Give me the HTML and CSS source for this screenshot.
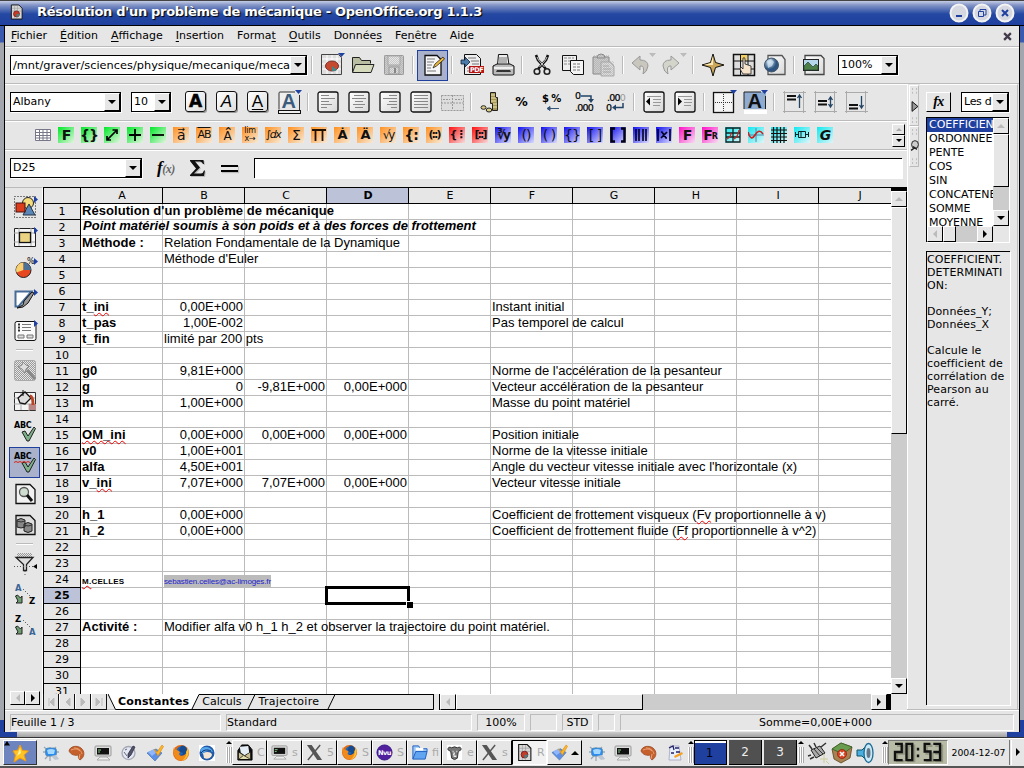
FILE: index.html
```html
<!DOCTYPE html>
<html lang="fr">
<head>
<meta charset="utf-8">
<title>Résolution d'un problème de mécanique - OpenOffice.org 1.1.3</title>
<link rel="stylesheet" href="styles.css">
</head>
<body>
<svg class="defs" width="0" height="0">
  <defs>
    <linearGradient id="paper" x1="0" y1="0" x2="1" y2="1"><stop offset="0" stop-color="#fff"/><stop offset="1" stop-color="#d8d8d8"/></linearGradient>
    <radialGradient id="blueball" cx=".35" cy=".3"><stop offset="0" stop-color="#cfe4f5"/><stop offset="1" stop-color="#2d5480"/></radialGradient>
    <pattern id="dots" width="2" height="2" patternUnits="userSpaceOnUse"><rect width="1" height="1" fill="#999"/><rect x="1" y="1" width="1" height="1" fill="#999"/></pattern>
  </defs>
  <symbol id="i-calc" viewBox="0 0 16 16"><path d="M2.500 .500h8L14 4v11.500H2.500z" fill="#d8d8d8" stroke="#111"/><path d="M3 4h10M3 7h10M6 1v14M9 1v14" stroke="#999" stroke-width=".6"/><circle cx="8" cy="10" r="3.200" fill="#c43c28" stroke="#611" stroke-width=".7"/><path d="M8 10v3.200a3.200 3.200 0 0 0 3.200-3.200z" fill="#487f80"/></symbol>
  <symbol id="i-term" viewBox="0 0 18 18"><rect x="1" y="2" width="16" height="10" rx="1" fill="#ddd" stroke="#999"/><rect x="3" y="4" width="12" height="6.500" fill="#111"/><path d="M4 6h3M4 8h2" stroke="#8c8"/><path d="M6 13h7l3 3H3z" fill="#eee" stroke="#aaa"/></symbol>
  <symbol id="i-gear" viewBox="0 0 18 18"><path d="M2 3l14 12M14 3L3 15M8 3v14M1 8h16" stroke="#9ab" stroke-width="1.300"/><rect x="3.500" y="4" width="11" height="8" rx="2.500" fill="#298cf0" stroke="#58a" stroke-width=".8"/><path d="M5 6q4-2 8 0l-1 4H6z" fill="#a5d8ff"/><path d="M9 12l4 4 4-1-3-4z" fill="#bcc6d2"/></symbol>
  <symbol id="i-shell" viewBox="0 0 18 18"><path d="M1 7c1-5 8-6 12-3 4 3 4 9-1 12-2-1-2-4-1-5-4 1-8 0-10-4z" fill="#c5602d" stroke="#9a4a22" stroke-width=".8"/><path d="M3 6c3-1 6-2 9 1M6 4c4 0 7 2 8 6M12 10l-1 5" stroke="#eda373" fill="none"/></symbol>
  <symbol id="i-pen" viewBox="0 0 18 18"><circle cx="8.500" cy="9" r="6.500" fill="#e3e8f3" stroke="#a5a8b5" stroke-width="1.300"/><path d="M13 2l2 1-4 8-3 3v-4z" fill="#556" stroke="#224" stroke-width=".7"/><path d="M4 8l3 4M5 6l2-1" stroke="#667"/></symbol>
  <symbol id="i-check" viewBox="0 0 18 18"><path d="M1 9l9-4 6 4-7 8z" fill="#5d8fe6" stroke="#47a" stroke-width=".7"/><path d="M2 8l6-3 3 3-5 4z" fill="#8fb6fa"/><path d="M8 5l3 3 5-7 1.500 1.500L12 12z" fill="#fbb52a" stroke="#d80" stroke-width=".6"/></symbol>
  <symbol id="i-fox" viewBox="0 0 18 18"><circle cx="9" cy="9" r="8" fill="#e36a10"/><circle cx="10" cy="7.500" r="5.500" fill="#2268b8"/><path d="M9 2c3-2 7 2 6 6-1 5-6 6-9 3 3 1 5-1 5-2l-3-1-1-2z" fill="#174b91"/><path d="M2 3c0 2 1 3 3 3l3 2-1 2c1 3 6 2 8-2 0 6-4 9-8 8S0 9 2 3z" fill="#f08a1b"/><path d="M16 4c2 6-1 12-7 13 4-2 6-6 5-9z" fill="#ffc32c"/></symbol>
  <symbol id="i-bird" viewBox="0 0 18 18"><rect x="1" y="1" width="16" height="16" fill="#fff"/><circle cx="9" cy="9" r="7.500" fill="#235aa8"/><path d="M5 9c4-2 9-1 9 2-1 3-5 5-8 3z" fill="#f3e7d4"/><path d="M2 6c4-5 11-3 13 2-4-2-8-1-11 2z" fill="#58a8ee"/><path d="M3 9c2-3 6-4 10-2" stroke="#0e2f66" fill="none"/></symbol>
  <symbol id="i-x" viewBox="0 0 18 18"><path d="M1 1h5l11 16h-5z" fill="#555"/><path d="M15 1L2 17" stroke="#555" stroke-width="1.500"/></symbol>
  <symbol id="i-mail" viewBox="0 0 18 18"><path d="M2 7l4-6h7l4 5v11H2z" fill="#111" stroke="#000"/><path d="M4 3l9-1 1 7-5 3-4-3z" fill="#e4edf5"/><path d="M3 9l6 4 6-4v7H3z" fill="#c9bf93"/><path d="M3 16l5-4 7 4" fill="#e4dcae" stroke="#443"/></symbol>
  <symbol id="i-vectors" viewBox="0 0 18 18"><path d="M4 2h9l2 14H3z" fill="#e8f0fc" stroke="#99b" stroke-width=".7"/><path d="M3 4l4-2 1 4M9 4h4M5 9h3M10 8h4" stroke="#226" fill="none" stroke-width="1.300"/><path d="M8 12l8-4 1 2-8 4z" fill="#f5a020"/></symbol>
  <symbol id="i-abc" viewBox="0 0 24 24"><text class="abc" x="1" y="8">ABC</text><path d="M9 12l3-1 3 5 6-9 1.500 1.500L16 21h-2z" fill="#7fb08a" stroke="#111" stroke-width=".9"/></symbol>
  <symbol id="i-al" viewBox="0 0 24 24"><rect x="2" y="2" width="20" height="20" rx="2" fill="url(#paper)" stroke="#111" stroke-width="1.300"/></symbol>
</svg>

<div class="desktop">
  <main class="window">
    <header class="title">
      <svg class="title-icon"><use href="#i-calc"/></svg>
      <h1>Résolution d'un problème de mécanique - OpenOffice.org 1.1.3</h1>
      <div class="winbtns">
        <svg viewBox="0 0 20 20"><circle cx="10" cy="10" r="8.500"/><path d="M7 13h6" stroke-width="2"/></svg>
        <svg viewBox="0 0 20 20"><circle cx="10" cy="10" r="8.500"/><path d="M8 9V6.500h6V12h-2M6.500 8.500h5v5h-5z"/></svg>
        <svg viewBox="0 0 20 20"><circle cx="10" cy="10" r="8.500"/><path d="M7 7l6 6M13 7l-6 6" stroke-width="2"/></svg>
      </div>
    </header>
    <div class="frame">
      <nav class="menu">
        <span><u>F</u>ichier</span><span><u>É</u>dition</span><span><u>A</u>ffichage</span><span><u>I</u>nsertion</span><span>Forma<u>t</u></span><span><u>O</u>utils</span><span>Donnée<u>s</u></span><span>Fe<u>n</u>être</span><span>Ai<u>d</u>e</span>
        <svg class="close" viewBox="0 0 8 8"><path d="M1 1l6 6M7 1L1 7" stroke="#433a4c" stroke-width="2"/></svg>
      </nav>
      <div class="bar bar-main">
        <div class="combo path"><span>/mnt/graver/sciences/physique/mecanique/meca</span><i></i></div>
        <b class="sep"></b>
        <button class="tb"><svg viewBox="0 0 24 24"><path d="M1.500 1.500h17l3 3v17h-20z" fill="#ddd" stroke="#444"/><path d="M2 6h19M2 11h19M2 16h19M7 2v19M12 2v19M17 2v19" stroke="#fff"/><path d="M5.500 13a6.500 5 0 1 0 13 0 6.500 5 0 0 0-13 0z" fill="#c4492f" stroke="#733"/><path d="M12 13l5 4a6 5 0 0 1-5 1z" fill="#3c8a8a"/><path d="M18 0h7l-3.500 4z" fill="#2040a0"/></svg></button>
        <button class="tb"><svg viewBox="0 0 24 24"><path d="M1.500 19V4.500h7l2 3h9v3" fill="#b9bda2" stroke="#222"/><path d="M1.500 19.500l3-8h18.500l-3 8z" fill="#d6dabd" stroke="#222"/></svg></button>
        <button class="tb"><svg viewBox="0 0 24 24"><rect x="2.500" y="2.500" width="19" height="19" rx="1" fill="#ccc" stroke="#999"/><rect x="6" y="3" width="12" height="9" fill="#e6e6e6" stroke="#aaa"/><rect x="7" y="14" width="10" height="7" fill="#ddd" stroke="#999"/><rect x="2" y="2" width="20" height="20" fill="url(#dots)" opacity=".4"/><path d="M13 15v5" stroke="#888" stroke-width="2"/></svg></button>
        <b class="sep"></b>
        <button class="tb on"><svg viewBox="0 0 24 24"><path d="M4 2.500h12l4 4v15.500H4z" fill="#f6f6f6" stroke="#111" stroke-width="1.300"/><path d="M6 6h8M6 9h7M6 12h5M6 15h4M6 18h9" stroke="#777"/><path d="M12 15l2-4 8-7 1.500 2-8 7z" fill="#f3bd3a" stroke="#222" stroke-width=".8"/></svg></button>
        <b class="sep"></b>
        <button class="tb"><svg viewBox="0 0 24 24"><path d="M4.500 1.500h12l4 4v16h-16z" fill="#eee" stroke="#111"/><path d="M8 5h8M11 8h8M12 11h7M7 15h3M7 18h3" stroke="#777"/><path d="M1 7h4V4l5 5-5 5v-3H1z" fill="#4b7ba8" stroke="#123" stroke-width=".8"/><rect x="9" y="13" width="15" height="7" fill="#b81414"/><text class="pdf" x="10" y="19">PDF</text></svg></button>
        <button class="tb"><svg viewBox="0 0 24 24"><path d="M6.500 12l1-10.500h9L18 12" fill="#eee" stroke="#111"/><path d="M8 5h8M8 7h8M8 9h8" stroke="#777"/><path d="M2 13l4-2h13l4 2v8q0 1-2 1H4q-2 0-2-1z" fill="#bbb" stroke="#111"/><path d="M3 15h19" stroke="#eee" stroke-width="2"/><path d="M6 17h13l1 2H5z" fill="#333"/></svg></button>
        <b class="sep"></b>
        <button class="tb"><svg viewBox="0 0 24 24"><path d="M6 2l2 5 8 9M18 2l-2 5-8 9" fill="none" stroke="#111" stroke-width="2.600"/><path d="M7 4l1.500 3 6 7M17 4l-1.500 3-6 7" fill="none" stroke="#ddd" stroke-width=".9"/><circle cx="7" cy="18.500" r="2.800" fill="none" stroke="#222" stroke-width="1.600"/><circle cx="17" cy="18.500" r="2.800" fill="none" stroke="#222" stroke-width="1.600"/></svg></button>
        <button class="tb"><svg viewBox="0 0 24 24"><path d="M1.500 2.500h14v15h-14z" fill="#eee" stroke="#111"/><path d="M3 5h10M3 8h10M3 11h6" stroke="#888" stroke-dasharray="3 1"/><path d="M9.500 7.500h13v14h-10l-3-3z" fill="#f4f4f4" stroke="#111"/><path d="M12 11h8M12 14h8M12 17h8" stroke="#777" stroke-dasharray="3 1"/></svg></button>
        <button class="tb"><svg viewBox="0 0 24 24"><path d="M1 4h16v17H1z" fill="#ccc" stroke="#888"/><path d="M5 5q0-4 4-4t4 4z" fill="#ccc" stroke="#888"/><path d="M9 9h9l4 4v10H9z" fill="#ddd" stroke="#aaa"/><path d="M11 13h6M11 16h8M11 19h8" stroke="#aaa"/><path d="M1 2h16v6h5v15H9v-2H1z" fill="url(#dots)" opacity=".4"/></svg></button>
        <b class="sep"></b>
        <button class="tb"><svg viewBox="0 0 24 24"><path d="M1 10l8-7v4q8 0 8 6-1 6-5 8 2-9-3-8v4z" fill="#c8c6bd" stroke="#999"/><path d="M18 0h7l-3.500 4z" fill="#bbb"/></svg></button>
        <button class="tb"><svg viewBox="0 0 24 24"><path d="M17 10L9 3v4q-8 0-8 6 1 6 5 8-2-9 3-8v4z" fill="#d3d5cb" stroke="#999"/><path d="M18 0h7l-3.500 4z" fill="#bbb"/></svg></button>
        <b class="sep"></b>
        <button class="tb"><svg viewBox="0 0 24 24"><path d="M12 1l2.500 8.500L23 12l-8.500 2.500L12 23l-2.500-8.500L1 12l8.500-2.500z" fill="#caa75a" stroke="#111"/><path d="M12 3v9H3l7-2z" fill="#fbe9b8"/></svg></button>
        <button class="tb"><svg viewBox="0 0 24 24"><path d="M1.500 1.500h21v21h-21z" fill="#ddd" stroke="#111" stroke-width="1.500"/><path d="M9 2h6v6H9z" fill="#f4ce62"/><path d="M1 8h22M1 16h22M8.500 1v22M16 1v22" stroke="#111"/><path d="M11 5q2-1 2 1v5l6 2v8h-8l-3-5 1-2 2 2z" fill="#f4e2cb" stroke="#222" stroke-width=".8"/></svg></button>
        <button class="tb"><svg viewBox="0 0 24 24"><path d="M5 2.500h14l3 4v15H5z" fill="url(#paper)" stroke="#555" stroke-width="1.300"/><circle cx="8.500" cy="12" r="7" fill="url(#blueball)" stroke="#456"/><path d="M4 8l4-2 3 3-2 4-4 2z" fill="#d7e8f2" opacity=".7"/></svg></button>
        <b class="sep"></b>
        <button class="tb"><svg viewBox="0 0 24 24"><path d="M3 2.500h16l3 3v16H3z" fill="url(#paper)" stroke="#444" stroke-width="1.300"/><rect x="1.500" y="6.500" width="15" height="11" fill="#b6d6ec" stroke="#222"/><path d="M2 17v-4l4-4 5 5 3-3 2 2v4z" fill="#4e7f48" stroke="#243" stroke-width=".7"/></svg></button>
        <div class="combo zoom"><span>100%</span><i></i></div>
      </div>
      <div class="mid">
        <div class="left-area">
          <div class="bar bar-format">
            <div class="combo font"><span>Albany</span><i></i></div>
            <div class="combo size"><span>10</span><i></i></div>
            <div class="group">
            <button class="tb"><em class="key heavy">A</em></button>
            <button class="tb"><em class="key ital">A</em></button>
            <button class="tb"><em class="key und">A</em></button>
            <button class="tb"><svg viewBox="0 0 24 24"><path d="M22.500 5v15M2 19.500V3q0-1 1-1h15" stroke="#333" fill="#f0f0f0"/><text class="fc" x="4.500" y="18">A</text><rect x="1.500" y="20.500" width="22" height="3" fill="#eee" stroke="#111"/><path d="M18 0h7l-3.500 4z" fill="#2040a0"/></svg></button>
            <b class="sep"></b>
            <button class="tb"><svg viewBox="0 0 24 24"><use href="#i-al"/><path d="M5 5.500h8M5 8.500h14M5 11.500h8M5 14.500h11M5 17.500h6" stroke="#888"/></svg></button>
            <button class="tb"><svg viewBox="0 0 24 24"><use href="#i-al"/><path d="M7 5.500h10M5 8.500h14M8 11.500h8M6 14.500h12M8 17.500h8" stroke="#888"/></svg></button>
            <button class="tb"><svg viewBox="0 0 24 24"><use href="#i-al"/><path d="M11 5.500h8M5 8.500h14M11 11.500h8M9 14.500h10M13 17.500h6" stroke="#888"/></svg></button>
            <button class="tb"><svg viewBox="0 0 24 24"><use href="#i-al"/><path d="M5 5.500h14M5 8.500h14M5 11.500h14M5 14.500h14M5 17.500h14" stroke="#888"/></svg></button>
            <button class="tb"><svg viewBox="0 0 24 24"><path d="M1.500 5.500h22v15h-22zM1 13h22M12.500 5v15" fill="#ddd" stroke="#999" stroke-dasharray="2 1"/><path d="M3 9.500h7M15 9.500h7" stroke="#999" stroke-dasharray="2 1"/></svg></button>
            <b class="sep"></b>
            <button class="tb"><svg viewBox="0 0 24 24"><path d="M11.500 2.500h5v5h2v13h-5v-7h-2z" fill="#a89654" stroke="#222"/><path d="M12 5h4M12 8h5M12 11h5M14 14h4M14 17h4" stroke="#f1e5ad"/><ellipse cx="4.500" cy="17.500" rx="2.500" ry="1.800" fill="#d9cb83" stroke="#222"/><ellipse cx="10" cy="20" rx="2.800" ry="2" fill="#d9cb83" stroke="#222"/></svg></button>
            <button class="tb"><em class="pct">%</em></button>
            <button class="tb"><svg viewBox="0 0 24 24"><text class="cur" x="1" y="12">$ %</text><path d="M7 18.500h11M6 18.500l3-2v4z" stroke="#357" fill="#357"/></svg></button>
            <button class="tb"><svg viewBox="0 0 24 24"><text class="dec" x="3" y="9">0</text><text class="dec" x="3" y="21">.000</text><path d="M9 6h10v4" stroke="#246" fill="none" stroke-width="1.500"/><path d="M16 9h6l-3 4z" fill="#246"/></svg></button>
            <button class="tb"><svg viewBox="0 0 24 24"><text class="dec" x="4" y="11">.00<tspan fill="#999" stroke="none">0</tspan></text><text class="dec" x="3" y="21">0</text><path d="M20 13v4.500H12" stroke="#246" fill="none" stroke-width="1.500"/><path d="M13 14.500v6l-4-3z" fill="#246"/></svg></button>
            <b class="sep"></b>
            <button class="tb"><svg viewBox="0 0 24 24"><use href="#i-al"/><path d="M5 6.500h14M11 9.500h8M11 12.500h8M11 15.500h7" stroke="#999"/><path d="M4 11.500l4-4v8z"/></svg></button>
            <button class="tb"><svg viewBox="0 0 24 24"><use href="#i-al"/><path d="M5 6.500h14M11 9.500h8M11 12.500h8M11 15.500h7" stroke="#999"/><path d="M9 11.500l-4-4v8z"/></svg></button>
            <b class="sep"></b>
            <button class="tb"><svg viewBox="0 0 24 24"><rect x="1.500" y="2.500" width="20" height="20" fill="#f4f4f4" stroke="#111" stroke-width="1.300"/><path d="M3 12.500h18M11.500 4v17" stroke="#333" stroke-dasharray="1 1"/><path d="M18 0h7l-3.500 4z" fill="#2040a0"/></svg></button>
            <button class="tb"><svg viewBox="0 0 24 24"><rect x="1" y="2" width="22" height="17" fill="#8fabd0"/><path d="M1 19V2h17M22.500 6v13" fill="none" stroke="#222"/><text class="fc bg" x="4.500" y="18">A</text><rect x="1" y="20" width="23" height="4" fill="#fff"/><path d="M18 0h7l-3.500 4z" fill="#2040a0"/></svg></button>
            <b class="sep"></b>
            <button class="tb"><svg viewBox="0 0 24 24"><path d="M2.500 1v22M21.500 1v22M1 2.500h23M1 21.500h23" stroke="#aaa"/><path d="M5 6h9M5 9.500h9" stroke="#111" stroke-width="2"/><path d="M17.500 18V5M15.500 8l2-3 2 3" stroke="#246" fill="none" stroke-width="1.300"/></svg></button>
            <button class="tb"><svg viewBox="0 0 24 24"><path d="M2.500 1v22M21.500 1v22M1 2.500h23M1 21.500h23" stroke="#aaa"/><path d="M5 11h9M5 14.500h9" stroke="#111" stroke-width="2"/><path d="M17.500 17V7M15.500 10l2-3 2 3M15.500 14l2 3 2-3" stroke="#246" fill="none" stroke-width="1.300"/></svg></button>
            <button class="tb"><svg viewBox="0 0 24 24"><path d="M2.500 1v22M21.500 1v22M1 2.500h23M1 21.500h23" stroke="#aaa"/><path d="M5 15h9M5 18.500h9" stroke="#111" stroke-width="2"/><path d="M17.500 6v12M15.500 15l2 3 2-3" stroke="#246" fill="none" stroke-width="1.300"/></svg></button>
            </div>
          </div>
          <div class="bar bar-math">
            <div class="mathicons">
              <svg class="m" viewBox="0 0 16 16"><path d="M.500 2.500h15v11H.500zM.500 5.500h15M.500 8.500h15M.500 11h15M4.500 2v12M8 2v12M12 2v12" fill="#fff" stroke="#778"/></svg>
              <span class="m g bold">F</span><span class="m g bold">{}</span>
              <svg class="m g" viewBox="0 0 16 16"><path d="M3 13L13 3M8.500 3H13v4M3 9v4h4" stroke="#000" stroke-width="1.700" fill="none"/></svg>
              <svg class="m g" viewBox="0 0 16 16"><path d="M8 2v12M2 8h12" stroke="#000" stroke-width="1.800"/></svg>
              <svg class="m g" viewBox="0 0 16 16"><path d="M2 8h12" stroke="#000" stroke-width="1.800"/></svg>
              <span class="m o vec">a</span><span class="m o over">AB</span><span class="m o hat">A</span><span class="m o lim">lim<br>x→</span><span class="m o int">∫dx</span><span class="m o">Σ</span>
              <svg class="m o" viewBox="0 0 16 16"><path d="M1 3h14M4.500 3v11M11.500 3v11" stroke="#210" stroke-width="1.800"/></svg>
              <span class="m o dot">Ȧ</span><span class="m o dot">Ä</span><span class="m o rooty">√y</span><span class="m o bold">{:</span><span class="m o sm">(::)</span>
              <span class="m r sm">{⋮</span><span class="m r sm">[::]</span>
              <span class="m b rooty bold">∛y</span><span class="m b">()</span><span class="m b">( )</span><span class="m b">{}</span><span class="m b">[ ]</span>
              <svg class="m b" viewBox="0 0 16 16"><path d="M5 1.500H1.500v13H5M11 1.500h3.500v13H11" fill="none" stroke="#001" stroke-width="2.500"/></svg>
              <svg class="m b" viewBox="0 0 16 16"><path d="M3 2v12M6 2v12M10 2v12M13 2v12" stroke="#002" stroke-width="1.600"/></svg>
              <svg class="m b" viewBox="0 0 16 16"><path d="M2 2v12M14 2v12M5 5h1l4 6h1M11 5l-6 6" stroke="#002" stroke-width="1.700" fill="none"/></svg>
              <span class="m p bold">F</span><span class="m p bold fr">F<small>R</small></span>
              <svg class="m c" viewBox="0 0 16 16"><path d="M1 1h14v14H1zM8 1v14M1 6h14M1 10h14" fill="none" stroke="#122" stroke-width="1.300"/><path d="M2 12q4-2 4-6M9 12q4-2 5-9" fill="none" stroke="#c22" stroke-width="1.300"/></svg>
              <svg class="m c" viewBox="0 0 16 16"><path d="M8 1v14M0 8h16" stroke="#58a"/><path d="M0 5q3 10 7 3t8-1" fill="none" stroke="#c22" stroke-width="1.600"/></svg>
              <svg class="m c" viewBox="0 0 16 16"><path d="M0 3h16M0 6.500h16M0 10h16M0 13.500h16M2.500 0v16M6 0v16M9.500 0v16M13 0v16" stroke="#111" stroke-width="1.200"/></svg>
              <svg class="m c" viewBox="0 0 16 16"><path d="M1.500 5v5M1 7.500h3M12 7.500h3M14.500 5v5M4.500 4.500h7v6h-7zM7 5v5" fill="none" stroke="#122"/></svg>
              <span class="m c gi">G</span>
            </div>
            <div class="spin"><i class="up"></i><i class="down"></i></div>
          </div>
          <div class="bar bar-cell">
            <div class="combo name"><span>D25</span><i></i></div>
            <span class="fx">f<small>(x)</small></span>
            <svg class="sum" viewBox="0 0 17 18"><path d="M1 1h13.500l.5 4h-1q-1-2.500-3-2.500H6l5 6-6 6h7q2 0 3-3h1l-1 5.500H1v-1l6-6.500L1 2z" fill="#111"/></svg>
            <span class="eq"></span>
            <div class="input"></div>
          </div>
          <div class="work">
            <aside class="tools">
              <button class="tb"><svg viewBox="0 0 24 24"><rect x="1.500" y="1.500" width="21" height="21" fill="none" stroke="#111" stroke-dasharray="1 2"/><circle cx="15" cy="8" r="5.500" fill="#f5dc7c" stroke="#222"/><path d="M16 9l6 11H10z" fill="#5b86b8" stroke="#234"/><rect x="3" y="8" width="9" height="9" fill="#db3c1c" stroke="#411"/><path d="M21 1v7l4-3.500z" fill="#2040a0"/></svg></button>
              <button class="tb"><svg viewBox="0 0 24 24"><path d="M1.500 2.500h21v18h-21z" fill="#f5f5f5" stroke="#222"/><path d="M1 7h21M1 16h21M6 2v18M18 2v18" stroke="#aaa"/><rect x="6.500" y="6.500" width="11" height="10" fill="#ebd384" stroke="#111" stroke-width="1.300"/><path d="M21 1v7l4-3.500z" fill="#2040a0"/></svg></button>
              <button class="tb"><svg viewBox="0 0 24 24"><circle cx="10.500" cy="13" r="7.500" fill="#e84820" stroke="#222"/><path d="M10.500 13V5.500a7.500 7.500 0 0 0-7 10z" fill="#f7d171"/><path d="M10.500 13V5.500a7.500 7.500 0 0 1 7.500 7.500z" fill="#4d7196"/><text class="pc" x="14" y="7">%</text><path d="M21 1v7l4-3.500z" fill="#2040a0"/></svg></button>
              <button class="tb"><svg viewBox="0 0 24 24"><path d="M2.500 3.500h16l-13 15h-3z" fill="#fff" stroke="#456b96" stroke-width="2"/><path d="M19 4l2 1-6 10-5 4-6 1 6-3 1-4z" fill="#999" stroke="#111"/><path d="M21 1v7l4-3.500z" fill="#2040a0"/></svg></button>
              <button class="tb"><svg viewBox="0 0 24 24"><rect x="2" y="2.500" width="21" height="19" rx="2" fill="#fafafa" stroke="#111"/><path d="M9 5.500h9M9 8.500h9M9 11.500h9" stroke="#777"/><path d="M5 5.500h2M5 8.500h2M5 11.500h2" stroke="#333" stroke-width="2"/><path d="M5 16h6v3H5zM14 16h6v3h-6z" fill="#ddd" stroke="#777"/><path d="M21 1v7l4-3.500z" fill="#2040a0"/></svg></button>
              <b class="hsep"></b>
              <button class="tb"><svg viewBox="0 0 24 24"><rect x="1.500" y="2.500" width="21" height="20" rx="2" fill="url(#dots)" stroke="#aaa"/><path d="M10 4l3 3 3 1-3 3-1 4-3-4-4-2 4-2z" fill="#ddd" stroke="#888"/><path d="M14 12l8 9" stroke="#888" stroke-width="3"/></svg></button>
              <button class="tb"><svg viewBox="0 0 24 24"><path d="M1.500 3.500h21v18h-21z" fill="#f4f4f4" stroke="#333"/><path d="M1 9h21M1 15h21M8 4v17M16 15v7" stroke="#aaa"/><rect x="16" y="15" width="7" height="6" fill="#b88"/><path d="M5 9l7-6 6 6-6 6-5-1z" fill="#ddd" stroke="#111" stroke-width="1.300"/><path d="M17 7q3 0 3 9" fill="none" stroke="#b42" stroke-width="3"/><path d="M10 7V1" stroke="#111"/></svg></button>
              <button class="tb"><svg><use href="#i-abc"/></svg></button>
              <button class="tb on"><svg viewBox="0 0 24 24"><use href="#i-abc"/><path d="M1 11.500l2-1 2 1 2-1 2 1 2-1 2 1 2-1 2 1" fill="none" stroke="#d21"/></svg></button>
              <button class="tb"><svg viewBox="0 0 24 24"><path d="M3 2.500h14l5 5v14H3z" fill="#f2f2f2" stroke="#111" stroke-width="1.300"/><circle cx="11" cy="10" r="4.500" fill="#cfdcd0" stroke="#555" stroke-width="1.300"/><path d="M14 13l5 6" stroke="#111" stroke-width="3"/></svg></button>
              <button class="tb"><svg viewBox="0 0 24 24"><path d="M3 2.500h14l5 5v14H3z" fill="#ddd" stroke="#111" stroke-width="1.300"/><path d="M4 7v7q4 2 8 0V7q-4-3-8 0zM11 11v7q4 3 8 0v-7q-4-3-8 0z" fill="#888" stroke="#222"/><path d="M4 8q4 2 8 0M11 12q4 2 8 0" fill="none" stroke="#333"/></svg></button>
              <b class="hsep"></b>
              <button class="tb"><svg viewBox="0 0 24 24"><rect x="4" y="1" width="15" height="4" fill="url(#dots)"/><path d="M3 5.500h17l-6.500 7v6h-3v-6z" fill="#ddd" stroke="#222" stroke-width="1.300"/><path d="M1 14.500h22M12 19v4" stroke="#555" stroke-dasharray="1 2"/><path d="M24 12v5l-4-2.500z"/></svg></button>
              <button class="tb"><svg viewBox="0 0 24 24"><text class="az blue" x="2" y="8">A</text><text class="az" x="16" y="21">Z</text><path d="M10 6l9 9" stroke="#333" stroke-dasharray="1 2"/><path d="M2.500 13l2-1 3 3 1.500-2v7H3l2-2z" fill="#6f9e72" stroke="#222"/></svg></button>
              <button class="tb"><svg viewBox="0 0 24 24"><text class="az" x="2" y="8">Z</text><text class="az blue" x="16" y="21">A</text><path d="M10 6l9 9" stroke="#333" stroke-dasharray="1 2"/><path d="M2.500 13l2-1 3 3 1.500-2v7H3l2-2z" fill="#6f9e72" stroke="#222"/></svg></button>
              <div class="toolnav"><i class="sbtn left dim"></i><i class="sbtn right"></i></div>
            </aside>
            <section class="sheet">
              <div class="sheet-top">
                <div class="grid" id="grid"></div>
                <div class="vscroll"><b class="split"></b><i class="sbtn up dim"></i><b class="thumb"></b><i class="sbtn down"></i></div>
              </div>
              <div class="sheet-foot">
                <svg class="tabnav" viewBox="0 0 65 16"><path d="M6 4v8M11 4v8L7 8zM27 4v8L23 8zM38 4v8l4-4zM53 4v8l4-4zM59 4v8" fill="#bbb" stroke="#bbb"/><path d="M15.500 0v15M31.500 0v15M47.500 0v15M63.500 0v15M0 15.500h64M.500 0v15" stroke="#111"/><path d="M16.500 0v15M32.500 0v15M48.500 0v15" stroke="#fff"/></svg>
                <div class="tabs">
                  <svg class="tabshape" viewBox="0 0 326 16"><path d="M0 0L7 15H84L91 0z" fill="#fff"/><path d="M84 15.500L91 .500H325.500V15.500z" fill="#e6e6e6"/><path d="M0 0L7.500 15.500H325.500V0M91 .500H325M84 15L91 .500M140 15L147 .500M220 15L227 .500" fill="none" stroke="#000"/></svg>
                  <span class="tab active">Constantes</span><span class="tab">Calculs</span><span class="tab wide">Trajectoire</span>
                </div>
                <div class="hscroll"><b class="grip"></b><i class="sbtn left dim"></i><b class="thumb"></b><i class="sbtn right"></i><b class="split"></b></div>
              </div>
            </section>
          </div>
        </div>
        <div class="dock">
          <div class="handle"><svg viewBox="0 0 9 40"><path d="M2 3h1M6 3h1M2 7h1M6 7h1M2 33h1M6 33h1M2 37h1M6 37h1" stroke="#bbb" stroke-width="2"/><path d="M2 16v10l6-5z" fill="#999" stroke="#111"/></svg></div>
          <div class="handle"><svg viewBox="0 0 9 40"><path d="M2 3h1M6 3h1M2 7h1M6 7h1M2 33h1M6 33h1M2 37h1M6 37h1" stroke="#bbb" stroke-width="2"/><ellipse cx="5" cy="18" rx="3.500" ry="4" fill="#ccc" stroke="#222"/><path d="M1 24l4-3M3 20l4 3" stroke="#222" stroke-width="1.500"/></svg></div>
        </div>
        <aside class="panel">
          <div class="panel-head"><button class="fxbtn">fx</button><div class="combo cat"><span>Les d</span><i></i></div></div>
          <div class="list">
            <div class="list-row"><ul><li class="sel">COEFFICIEN</li><li>ORDONNEE.</li><li>PENTE</li><li>COS</li><li>SIN</li><li>CONCATENE</li><li>SOMME</li><li>MOYENNE</li></ul>
            <div class="vscroll mini"><i class="sbtn up dim"></i><b class="thumb"></b><i class="sbtn down"></i></div></div>
            <div class="hscroll mini"><i class="sbtn left dim"></i><b class="thumb"></b><i class="sbtn right"></i></div>
          </div>
          <div class="help">COEFFICIENT.<br>DETERMINATI<br>ON:<br><br>Données_Y;<br>Données_X<br><br>Calcule le<br>coefficient de<br>corrélation de<br>Pearson au<br>carré.</div>
        </aside>
      </div>
      <footer class="status"><span class="s1">Feuille 1 / 3</span><span class="s2">Standard</span><span class="s3">100%</span><span class="s4"></span><span class="s5">STD</span><span class="s6"></span><span class="s7">Somme=0,00E+000</span></footer>
    </div>
  </main>
  <div class="taskbar">
    <div class="start"><svg viewBox="0 0 32 24"><path d="M0 4.500h6L3 0z"/><path d="M16 4l2.500 5.500 6 .500-4.500 4 2 6-6-3-6 4 1.500-7L9 10l5-1z" fill="#ffc423" stroke="#f29a12"/><path d="M16 7l1 5-4 3z" fill="#fff3a0"/></svg></div>
    <div class="launch"><svg><use href="#i-gear"/></svg><svg><use href="#i-shell"/></svg><svg><use href="#i-term"/></svg><svg><use href="#i-pen"/></svg><svg><use href="#i-check"/></svg><svg><use href="#i-fox"/></svg><svg><use href="#i-bird"/></svg></div>
    <b class="grab"></b>
    <div class="tasks">
      <div class="task"><svg><use href="#i-mail"/></svg><span>C</span></div>
      <div class="task"><svg><use href="#i-term"/></svg><span>s</span></div>
      <div class="task"><svg><use href="#i-x"/></svg><span>5</span></div>
      <div class="task"><svg><use href="#i-fox"/></svg><span>S</span></div>
      <div class="task"><svg viewBox="0 0 18 18"><circle cx="9" cy="9" r="8" fill="#51209d" stroke="#318"/><text class="nvu" x="2" y="12">Nvu</text></svg><span>S</span></div>
      <div class="task"><svg viewBox="0 0 18 18"><path d="M2 16V2h6l2 3h7v3" fill="#9cc7f6" stroke="#1c5fc0"/><path d="M2 16l3-8h12l-2 8z" fill="#61a5f0" stroke="#1c5fc0"/><path d="M5 4h8v3H5z" fill="#fff"/></svg><span>fi</span></div>
      <div class="task"><svg viewBox="0 0 18 18"><rect x="1" y="1" width="16" height="16" fill="#fff"/><path d="M2 6q0-4 4-2 3-2 6 0 4-2 4 2l-3 2-1 7q-3 3-6 0L5 8z" fill="#777" stroke="#333"/><path d="M7 8h1M11 8h1M8 13h3M9 9l-1 3" stroke="#eee" stroke-width="1.500"/></svg><span>e</span></div>
      <div class="task"><svg><use href="#i-x"/></svg><span>s</span></div>
      <div class="task active"><svg><use href="#i-calc"/></svg><span>R</span></div>
      <div class="task"><svg><use href="#i-check"/></svg><svg class="more" viewBox="0 0 8 18"><path d="M0 11h8L4 7z"/></svg></div>
    </div>
    <div class="launch two"><svg><use href="#i-gear"/></svg><svg><use href="#i-term"/></svg><svg><use href="#i-shell"/></svg><svg><use href="#i-vectors"/></svg></div>
    <b class="grab"></b>
    <div class="pager"><span class="current">1</span><span>2</span><span>3</span></div>
    <b class="grab"></b>
    <div class="tray">
      <svg viewBox="0 0 24 24"><path d="M5 9l9-4 5 7-9 5z" fill="#aaa" stroke="#222"/><path d="M6 8L3 4M10 6L8 2M15 6l5-4M2 15l3-1M4 18l4-2" stroke="#333" stroke-width="1.500"/><path d="M8 8l6 7M11 7l6 6" stroke="#333"/><path d="M18 13v9M14 18h8M20 20l3 3" stroke="#cc9"/></svg>
      <svg viewBox="0 0 24 24"><path d="M2 8l9-6 11 4-2 11-9 5-7-4z" fill="#a88250" stroke="#5b4420" stroke-width=".8"/><path d="M2 8l9-6 11 4-9 7z" fill="#6a9c50" stroke="#356026" stroke-width=".8"/><circle cx="12" cy="13" r="4.500" fill="#dc4524" stroke="#821" stroke-width=".8"/><path d="M10 11l4 4M14 11l-4 4" stroke="#fff" stroke-width="1.500"/></svg>
      <svg viewBox="0 0 24 24"><path d="M3 9h5l6-6v18l-6-6H3z" fill="#49aee0" stroke="#156"/><ellipse cx="14.500" cy="12" rx="4.500" ry="9.500" fill="#c9e9f7" stroke="#1d6a94" stroke-width="1.300"/><ellipse cx="14.500" cy="12" rx="2" ry="5" fill="#678"/></svg>
    </div>
    <b class="grab"></b>
    <div class="clock"><svg viewBox="0 0 60 24"><path class="shade" d="M8 5h7v8H8v8h8M20 5h6v16h-6zM45 5h-6v8h6v8h-7M48 5h7v16h-7M48 13h7"/><path class="seg" d="M6 3h7v8.500H6V20h8M18 3h6v17h-6zM30 7v3M30 14v3M43 3h-6v8h6v9h-7M46 3h7v17h-7M46 11.500h7"/></svg></div>
    <div class="date">2004-12-07</div>
    <div class="end"><svg viewBox="0 0 12 24"><path d="M4 8v8l4-4z"/></svg></div>
  </div>
</div>
<script src="sheet.js"></script>
</body>
</html>
```
FILE: styles.css
```css
* { box-sizing: border-box; }
body { margin: 0; overflow: hidden; font: 11px/14px "DejaVu Sans", sans-serif; color: #000; background: #e6e6e6; }
button { border: 0; background: none; padding: 0; font: inherit; }
svg { display: block; flex: none; }
i, em { font-style: normal; }
.defs { position: absolute; }
.desktop { width: 1024px; height: 768px; display: flex; flex-direction: column; }

/* window */
.window { height: 738px; display: flex; flex-direction: column; border-bottom: 1px solid #333;
  background:
    linear-gradient(#2040a0, #2040a0) 0 100% / 17px 17px no-repeat,
    linear-gradient(#2040a0, #2040a0) 100% 100% / 17px 17px no-repeat,
    linear-gradient(#3a5ab0 0 42px, #a4a6ae 43px 730px, #ccc 732px, #999 738px); }
.title { height: 26px; flex: none; display: flex; align-items: center; padding: 0 9px 2px 9px; border-top: 1px solid #444; border-bottom: 1px solid #000; background: linear-gradient(#c5cde5, #8596c7 4px, #2448a2 13px, #2040a0); }
.title-icon { width: 15px; height: 16px; margin-right: 13px; overflow: visible; }
h1 { margin: 0; flex: 1; color: #fff; font: bold 13px/16px "DejaVu Sans", sans-serif; letter-spacing: -.3px; white-space: nowrap; text-shadow: 1px 1px 1px #000; }
.winbtns { display: flex; gap: 3px; padding-top: 2px; }
.winbtns svg { width: 20px; height: 20px; }
.winbtns circle { fill: #d5d8e0; stroke: #f3f3f3; stroke-width: 2; }
.winbtns path { fill: none; stroke: #2040a0; }
.frame { height: 706px; margin: 0 4px; border-left: 1px solid #000; border-right: 1px solid #000; background: #e6e6e6; display: flex; flex-direction: column; }
.menu { height: 21px; display: flex; align-items: center; gap: 13px; padding: 0 7px 0 6px; border-bottom: 1px solid #bbb; flex: none; }
.menu u { text-underline-offset: 2px; }
.close { width: 9px; height: 9px; margin-left: auto; }

/* toolbars */
.bar { display: flex; align-items: center; flex: none; border-top: 1px solid #fff; border-bottom: 1px solid #bbb; }
.bar-main { height: 37px; padding: 0 0 1px 5px; }
.bar-format { height: 37px; padding: 0 0 2px 5px; }
.bar-math { height: 29px; padding: 0 2px 1px 30px; }
.bar-cell { height: 37px; padding: 0 5px 2px 5px; border-bottom: 0; }
.combo { height: 20px; flex: none; display: flex; background: #fff; border: 1px solid #000; box-shadow: 1px 1px 0 #fff; line-height: 18px; padding-left: 2px; }
.combo span { flex: 1; white-space: nowrap; min-width: 0; }
.combo i { width: 16px; height: 18px; flex: none; background: #e6e6e6; border: 1px solid; border-color: #fff #000 #000 #fff; display: flex; justify-content: center; align-items: center; }
.combo i::after { content: ""; border: 4px solid transparent; border-top-color: #000; border-bottom: 0; }
.path { width: 297px; font-size: 11.350px; margin-right: 1px; }
.font { width: 111px; }
.size { width: 40px; margin: 0 9px 0 10px; }
.group { display: flex; align-items: center; }
.zoom { width: 60px; margin-left: 9px; }
.name { width: 132px; }
.tb { width: 31px; height: 31px; flex: none; display: flex; align-items: center; justify-content: center; }
.tb svg { width: 24px; height: 24px; overflow: visible; }
.tb.on { background: #a9b1cb; border: 1px solid #2040a0; }
.sep { width: 8px; height: 18px; flex: none; background: linear-gradient(90deg, transparent 3px, #bbb 3px 4px, #fff 4px 5px, transparent 5px); }
.key { width: 21px; height: 21px; border: 1px solid #111; border-radius: 3px; background: linear-gradient(135deg, #fff, #ddd); font: 17px/19px "Liberation Sans", sans-serif; text-align: center; box-shadow: 1px 1px 0 #999; }
.heavy { font: bold 17px/19px "DejaVu Sans", sans-serif; -webkit-text-stroke: .5px #000; }
.ital { font-style: italic; }
.und { text-decoration: underline; text-underline-offset: 2px; }
.fc { font: bold 20px "Liberation Sans", sans-serif; fill: #3b5c7d; }
.fc.bg { fill: #111; }
.pdf { font: bold 6.500px "DejaVu Sans", sans-serif; fill: #fff; letter-spacing: -.4px; }
.pct { font: bold 12.500px "DejaVu Sans", sans-serif; }
.cur { font: bold 10px "DejaVu Sans", sans-serif; letter-spacing: -.6px; }
.dec { font: 9.500px "DejaVu Sans", sans-serif; letter-spacing: -.8px; stroke: #000; stroke-width: .2px; }
.abc { font: bold 8px "DejaVu Sans", sans-serif; letter-spacing: -.3px; }
.pc { font: 8px "DejaVu Sans", sans-serif; }
.az { font: bold 8.500px "DejaVu Sans", sans-serif; }
.az.blue { fill: #3b6596; }

.mathicons { display: flex; gap: 7px; flex: 1; }
.m { width: 16px; height: 16px; flex: none; font: 14px/16px "DejaVu Sans", sans-serif; white-space: nowrap; display: flex; justify-content: center; color: #111; letter-spacing: -1px; }
.g { background: linear-gradient(135deg, #00e828, #e4f5e0); }
.o { background: linear-gradient(135deg, #ff9020, #f7ead8); }
.r { background: linear-gradient(135deg, #ff1010, #f7dcdc); }
.b { background: linear-gradient(135deg, #1010f0, #dcdcff); }
.p { background: linear-gradient(135deg, #ff10c8, #f6def2); }
.c { background: linear-gradient(135deg, #10e8f0, #e0f6f8); }
.bold { font-weight: bold; }
.sm { font-size: 11px; font-weight: bold; letter-spacing: -2px; }
.fr small { font-size: 8px; line-height: 20px; }
.vec::before { content: "→"; font-size: 9px; line-height: 4px; margin-right: -7px; }
.over { font-size: 11px; text-decoration: overline; }
.hat { font-size: 12px; line-height: 18px; }
.hat::before { content: "⌃"; font-size: 12px; line-height: 10px; margin-right: -9px; }
.lim { display: block; font: 8px/8px "DejaVu Sans", sans-serif; letter-spacing: -.2px; text-align: center; }
.int { font-size: 11px; font-style: italic; letter-spacing: -1.500px; }
.dot { font-weight: bold; font-size: 13px; }
.rooty { font-size: 12px; letter-spacing: -2px; }
.gi { font-weight: bold; font-style: italic; }
.spin { width: 13px; height: 23px; display: flex; flex-direction: column; }
.spin i { flex: 1; display: flex; align-items: center; justify-content: center; border: 1px solid; border-color: #fff #000 #000 #fff; }
.spin i::after { content: ""; border: 3px solid transparent; }
.spin .up::after { border-top: 0; border-bottom-color: #aaa; }
.spin .down::after { border-top-color: #000; border-bottom: 0; }
.fx { width: 22px; margin-left: 15px; font: italic bold 17px/20px "Liberation Serif", serif; letter-spacing: -.5px; white-space: nowrap; }
.fx small { font-size: 12px; color: #666; }
.sum { margin-left: 10px; width: 17px; height: 18px; filter: drop-shadow(1px 1px 0 #bbb); }
.eq { margin: 0 16px 0 15px; width: 17px; height: 7px; border: solid #000; border-width: 2px 0; box-shadow: 1px 1px 1px #bbb; }
.input { flex: 1; height: 20px; background: #fff; border: solid #000; border-width: 1px 0 0 1px; box-shadow: 1px 1px 0 #fff; }

.mid { display: flex; flex: 1; min-height: 0; border-bottom: 1px solid #bbb; }
.left-area { width: 903px; flex: none; display: flex; flex-direction: column; min-height: 0; border-right: 1px solid #fff; }
.work { flex: 1; display: flex; min-height: 0; }
.tools { width: 38px; flex: none; padding: 3px 0 0 4px; display: flex; flex-direction: column; border-top: 1px solid #bbb; border-right: 1px solid #fff; }
.hsep { height: 8px; width: 17px; margin-left: 7px; flex: none; background: linear-gradient(transparent 3px, #bbb 3px 4px, #fff 4px 5px, transparent 5px); }
.toolnav { display: flex; margin-top: auto; margin-bottom: 4px; margin-left: 1px; width: 30px; }
.toolnav .sbtn { width: 15px; height: 14px; }

/* sheet */
.sheet { width: 864px; height: 523px; flex: none; display: flex; flex-direction: column; }
.sheet-top { display: flex; height: 507px; }
.grid { width: 848px; height: 507px; overflow: hidden; background: #fff; position: relative; }
.row { display: flex; height: 16px; width: 920px; }
.rh { width: 38px; height: 16px; flex: none; background: #e6e6e6; border: solid #000; border-width: 0 1px 1px; text-align: center; line-height: 15px; }
.head { height: 17px; border-top: 1px solid #000; }
.ch { width: 82px; flex: none; border-right: 1px solid #000; border-bottom: 1px solid #000; background: #e6e6e6; text-align: center; line-height: 16px; padding-left: 1px; }
.cur-head { background: #bcc3d9; font-weight: bold; }
.cell { width: 82px; height: 16px; flex: none; border-right: 1px solid #bbb; border-bottom: 1px solid #bbb; padding-left: 1px; white-space: nowrap; font: 13px/13px "Liberation Sans", sans-serif; letter-spacing: .01px; }
.cell span { position: relative; z-index: 1; }
.num { text-align: right; padding: 0 1px 0 0; letter-spacing: 0; direction: ltr; }
.cell.strong { font-weight: bold; letter-spacing: .05px; }
.cell.slant { font-weight: bold; font-style: italic; line-height: 12px; padding-left: 2px; }
.cell.small { font-size: 8px; line-height: 19px; }
.cell.small.strong { letter-spacing: .25px; }
.cell.link { letter-spacing: -.13px; }
.link span { background: #bbb; color: #22c; padding: 2px 0; }
.wavy { text-decoration: underline wavy #e00 1px; text-underline-offset: 1px; text-decoration-skip-ink: none; }
.cursor { position: absolute; left: 282px; top: 399px; width: 85px; height: 19px; border: 3px solid #000; }
.cursor::after { content: ""; position: absolute; right: -6px; bottom: -6px; width: 6px; height: 6px; background: #000; border: solid #fff; border-width: 1px 0 0 1px; }

.sbtn { width: 16px; height: 16px; flex: none; background: #e6e6e6; border: 1px solid; border-color: #fff #000 #000 #fff; display: flex; align-items: center; justify-content: center; }
.sbtn::after { content: ""; border: 4px solid transparent; }
.sbtn.up::after { border-top: 0; border-bottom-color: #000; }
.sbtn.down::after { border-bottom: 0; border-top-color: #000; }
.sbtn.left::after { border-left: 0; border-right-color: #000; }
.sbtn.right::after { border-right: 0; border-left-color: #000; }
.sbtn.up.dim::after { border-bottom-color: #bbb; }
.sbtn.left.dim::after { border-right-color: #bbb; }
.vscroll { width: 16px; display: flex; flex-direction: column; background: #ccc; }
.vscroll .split { height: 4px; background: #000; }
.vscroll .thumb { height: 227px; background: #e6e6e6; border: 1px solid; border-color: #fff #000 #000 #fff; }
.vscroll .down { margin-top: auto; }
.sheet-foot { display: flex; height: 16px; }
.tabnav { width: 65px; height: 16px; }
.tabs { width: 326px; height: 16px; position: relative; display: flex; padding-left: 10px; }
.tabshape { position: absolute; left: 0; top: 0; width: 326px; height: 16px; }
.tab { position: relative; line-height: 15px; margin-right: 17px; }
.tab.active { font-weight: bold; letter-spacing: .15px; margin-right: 13px; }
.tab.wide { letter-spacing: .3px; }
.hscroll { display: flex; height: 16px; background: #ccc; }
.sheet .hscroll { width: 473px; }
.grip { width: 6px; background: #e6e6e6; border-right: 1px solid #000; }
.hscroll .thumb { width: 187px; background: #e6e6e6; border: 1px solid; border-color: #fff #000 #000 #fff; }
.hscroll .right { margin-left: auto; }
.sheet .hscroll .split { width: 20px; background: linear-gradient(90deg, #000 4px, #e6e6e6 4px); }

/* dock and function list */
.dock { width: 12px; flex: none; padding: 1px 0 0 1px; }
.handle { height: 41px; width: 10px; border: 1px solid; border-color: #fff #bbb #bbb #fff; }
.handle svg { width: 9px; height: 39px; }
.panel { width: 98px; flex: none; display: flex; flex-direction: column; padding: 7px 7px 4px 6px; border-right: 1px solid #bbb; border-top: 1px solid #fff; }
.panel-head { display: flex; justify-content: space-between; align-items: center; margin-bottom: 5px; }
.fxbtn { width: 25px; height: 20px; border: 1px solid; border-color: #fff #000 #000 #fff; font: italic bold 14px/16px "Liberation Serif", serif; letter-spacing: -.5px; }
.cat { width: 48px; margin-right: 1px; letter-spacing: -.3px; }
.list { height: 125px; flex: none; border: solid #000; border-width: 1px 0 0 1px; width: 83px; box-shadow: 1px 1px 0 #fff; }
.list-row { display: flex; height: 108px; }
ul { list-style: none; margin: 0; padding: 0; width: 66px; overflow: hidden; background: #fff; height: 108px; }
li { height: 14px; padding-left: 2px; white-space: nowrap; letter-spacing: -.05px; }
li.sel { background: #2040a0; color: #fff; }
.mini.vscroll .thumb { height: 53px; }
.mini.hscroll { width: 66px; }
.mini.hscroll .thumb { width: 13px; }
.help { flex: 1; margin-top: 9px; border: solid #000; border-width: 1px 0 0 1px; box-shadow: 1px 1px 0 #fff; padding: 1px 0 0; line-height: 13px; letter-spacing: .08px; white-space: nowrap; }

/* status bar */
.status { height: 22px; flex: none; display: flex; gap: 5px; padding: 3px 5px 2px; border-top: 1px solid #fff; }
.status span { border: 1px solid; border-color: #bbb #fff #fff #bbb; height: 17px; line-height: 15px; flex: none; }
.s1 { width: 211px; }
.s2 { width: 246px; }
.s3 { width: 48px; text-align: center; }
.s4 { width: 27px; }
.s5 { width: 31px; text-align: center; }
.s6 { width: 17px; }
.status .s7 { flex: 1; text-align: center; padding-right: 3px; }

/* task bar */
.taskbar { height: 30px; background: #e6e6e6; border-top: 1px solid #fff; border-bottom: 2px solid #555; display: flex; padding: 1px 0 1px 3px; align-items: center; }
.start { width: 34px; height: 25px; background: #6d84bf; border: 1px solid; border-color: #fff #333 #333 #fff; }
.start svg { width: 32px; height: 24px; }
.launch { display: flex; gap: 8px; width: 188px; padding-left: 5px; }
.launch svg { width: 18px; height: 18px; }
.launch.two { padding-left: 6px; width: 105px; }
.grab { width: 7px; height: 24px; flex: none; display: flex; flex-direction: column; align-items: center; gap: 3px; }
.grab::before { content: ""; border: 3px solid transparent; border-top: 0; border-bottom-color: #000; }
.grab::after { content: ""; width: 6px; height: 16px; background: repeating-linear-gradient(90deg, #fff 0 1px, #aaa 1px 2px); }
.tasks { display: flex; }
.task { width: 35px; height: 25px; display: flex; align-items: center; gap: 4px; padding-left: 3px; border: 1px solid; border-color: #fff #000 #000 #fff; color: #aaa; }
.task svg { width: 17px; height: 17px; }
.task.active { background: #f2f2f2; border-color: #000 #fff #fff #000; }
.task .more { width: 8px; height: 18px; margin-left: -1px; }
.pager { display: flex; gap: 2px; width: 103px; }
.pager span { width: 33px; height: 25px; background: #505050; color: #eee; text-align: center; line-height: 24px; font-size: 12px; border-right: 1px solid #000; border-bottom: 1px solid #000; }
.pager .current { line-height: 24px; background: #2040a0; color: #001; border: 1px solid #000; box-shadow: inset 0 2px 0 #fff; padding-right: 2px; }
.tray { display: flex; padding: 0 2px; width: 77px; }
.tray svg { width: 24px; height: 24px; }
.clock { width: 60px; height: 25px; background: #b7bba5; border: 1px solid; border-color: #777 #fff #fff #777; }
.clock svg { width: 58px; height: 23px; }
.shade { fill: none; stroke: #92957f; stroke-width: 2.500; }
.seg { fill: none; stroke: #111; stroke-width: 2.500; }
.date { width: 62px; text-align: center; font-size: 9.300px; height: 25px; line-height: 25px; border-right: 1px solid #777; white-space: nowrap; }
.end { margin-left: 1px; width: 12px; height: 25px; border-left: 1px solid #fff; }
.end svg { width: 12px; height: 24px; }
.nvu { font: bold 7px "DejaVu Sans", sans-serif; fill: #fff; letter-spacing: -.5px; }
```
FILE: sheet.js
```js
// Cell contents by row number: [column, text, classes]; ~text~ is underlined by the spell checker
const cells = {
  1: [["A", "Résolution d'un problème de mécanique", "strong"]],
  2: [["A", "Point matériel soumis à son poids et à des forces de frottement", "slant"]],
  3: [["A", "Méthode :", "strong"], ["B", "Relation Fondamentale de la Dynamique", ""]],
  4: [["B", "Méthode d'Euler", ""]],
  7: [["A", "t_~ini~", "strong"], ["B", "0,00E+000", "num"], ["F", "Instant initial", ""]],
  8: [["A", "t_pas", "strong"], ["B", "1,00E-002", "num"], ["F", "Pas temporel de calcul", ""]],
  9: [["A", "t_fin", "strong"], ["B", "limité par 200 pts", ""]],
  11: [["A", "g0", "strong"], ["B", "9,81E+000", "num"], ["F", "Norme de l'accélération de la pesanteur", ""]],
  12: [["A", "g", "strong"], ["B", "0", "num"], ["C", "-9,81E+000", "num"], ["D", "0,00E+000", "num"], ["F", "Vecteur accélération de la pesanteur", ""]],
  13: [["A", "m", "strong"], ["B", "1,00E+000", "num"], ["F", "Masse du point matériel", ""]],
  15: [["A", "~OM_ini~", "strong"], ["B", "0,00E+000", "num"], ["C", "0,00E+000", "num"], ["D", "0,00E+000", "num"], ["F", "Position initiale", ""]],
  16: [["A", "v0", "strong"], ["B", "1,00E+001", "num"], ["F", "Norme de la vitesse initiale", ""]],
  17: [["A", "alfa", "strong"], ["B", "4,50E+001", "num"], ["F", "Angle du vecteur vitesse initiale avec l'horizontale (x)", ""]],
  18: [["A", "v_~ini~", "strong"], ["B", "7,07E+000", "num"], ["C", "7,07E+000", "num"], ["D", "0,00E+000", "num"], ["F", "Vecteur vitesse initiale", ""]],
  20: [["A", "h_1", "strong"], ["B", "0,00E+000", "num"], ["F", "Coefficient de frottement visqueux (~Fv~ proportionnelle à v)", ""]],
  21: [["A", "h_2", "strong"], ["B", "0,00E+000", "num"], ["F", "Coefficient de frottement fluide (~Ff~ proportionnelle à v^2)", ""]],
  24: [["A", "~M.~CELLES", "small strong"], ["B", "sebastien.celles@ac-limoges.fr", "small link"]],
  27: [["A", "Activité :", "strong"], ["B", "Modifier alfa v0 h_1 h_2 et observer la trajectoire du point matériel.", ""]]
};
const cols = "ABCDEFGHIJ".split("");
const mark = t => t.replace(/~(.+?)~/g, '<u class="wavy">$1</u>');
let html = '<div class="row head"><div class="rh"></div>' +
  cols.map(c => `<div class="ch${c === "D" ? " cur-head" : ""}">${c}</div>`).join("") + "</div>";
for (let r = 1; r <= 31; r++) {
  html += `<div class="row"><div class="rh${r === 25 ? " cur-head" : ""}">${r}</div>`;
  for (const c of cols) {
    const d = (cells[r] || []).find(x => x[0] === c);
    html += d ? `<div class="cell ${d[2]}"><span>${mark(d[1])}</span></div>` : '<div class="cell"></div>';
  }
  html += "</div>";
}
document.getElementById("grid").innerHTML = html + '<div class="cursor"></div>';
```
